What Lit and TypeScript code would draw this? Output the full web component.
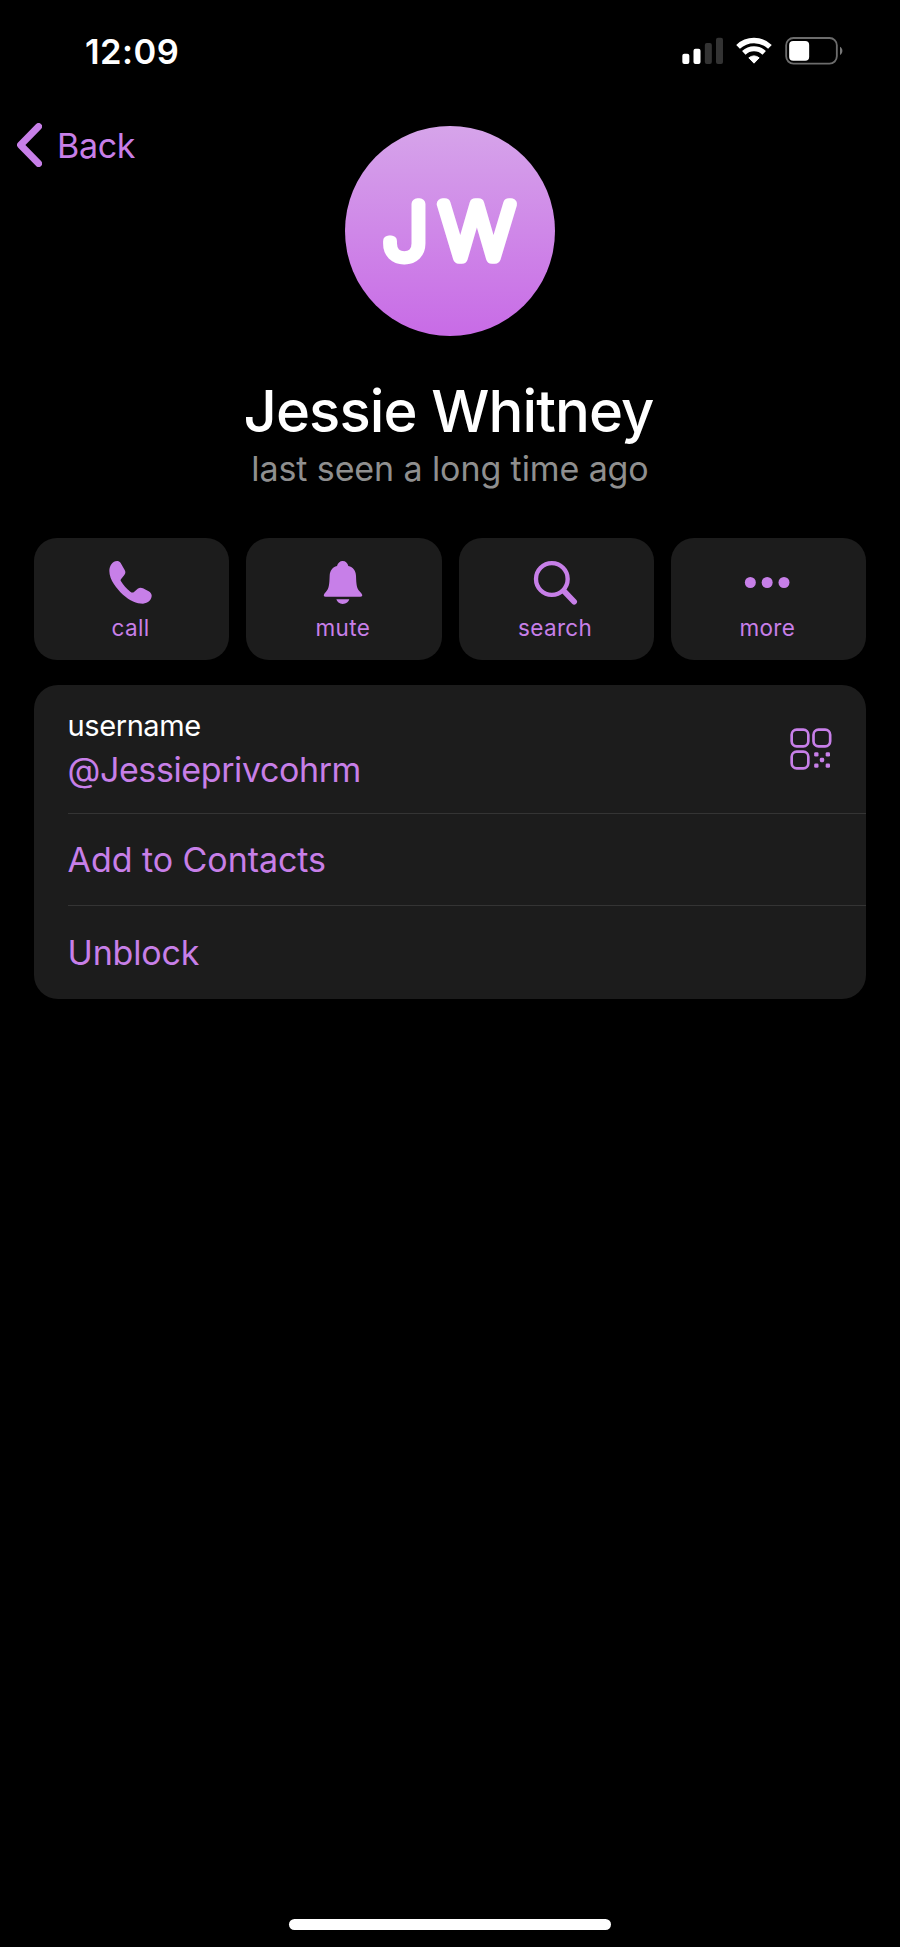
import { LitElement, html, svg, css } from "lit";
import { customElement } from "lit/decorators.js";

const icons = {
  call: svg`<svg class="icon" viewBox="263 93 144 132"><path d="M290 93C277 93 267 107 267 123C267 150 290 177 308 194C328 212 349 221 368 221C383 220 395 209 394 196C393 191 390 187 385 184L368 175C362 172 357 173 352 176L341 186C337 189 334 188 330 185C318 176 309 165 302 154C300 151 301 148 303 146L312 135C316 130 316 125 313 120L301 99C298 95 294 93 290 93Z"/></svg>`,
  mute: svg`<svg class="icon" viewBox="900 93 144 132"><path d="M968 93C977 93 983 99 985 108C1000 112 1007 122 1008 137C1009 165 1010 175 1020 185L1025 191C1029 196 1026 200 1021 200H917C911 200 910 196 913 191L918 185C927 175 928 165 929 137C930 122 937 112 951 108C953 99 960 93 968 93ZM949 208H988C986 216 979 222 968 222C958 222 951 216 949 208Z"/></svg>`,
  search: svg`<svg class="icon" viewBox="246.5 93 144 132"><circle class="line" cx="306" cy="147" r="47.500" stroke-width="13"/><path class="line" d="M343 184L373 215" stroke-width="17"/></svg>`,
  more: svg`<svg class="icon" viewBox="883 93 144 132"><circle cx="902" cy="157.500" r="16.500"/><circle cx="952.500" cy="157.500" r="16.500"/><circle cx="1003" cy="157.500" r="16.500"/></svg>`,
};

@customElement("status-bar")
class StatusBar extends LitElement {
  static styles = css`
    :host { display: flex; align-items: flex-start; justify-content: space-between; height: 123px; padding: 31.5px 57px 0 85px; box-sizing: border-box; }
    .time { font-size: 34.5px; font-weight: 600; line-height: 40px; letter-spacing: 0.5px; }
    .symbols { display: flex; gap: 12.5px; padding-top: 5.5px; }
    svg { display: block; height: 28px; }
    .signal { width: 41.333px; }
    .wifi { width: 36px; }
    .battery { width: 58px; margin-left: 0.7px; }
  `;
  render() {
    return html`
      <div class="time">12:09</div>
      <div class="symbols">
        <svg class="signal" viewBox="65 51 124 84" fill="#fff">
          <rect x="66" y="101" width="21" height="31" rx="6"/>
          <rect x="99.500" y="86" width="21" height="46" rx="6"/>
          <rect x="133.500" y="69" width="21" height="63" rx="6" fill="#333"/>
          <rect x="167" y="53" width="21" height="79" rx="6" fill="#333"/>
        </svg>
        <svg class="wifi" viewBox="227 51 108 84" fill="none" stroke="#fff">
          <path d="M233.200 80.600A69.500 69.500 0 0 1 328.800 80.600" stroke-width="16"/>
          <path d="M250.400 98.700A44.500 44.500 0 0 1 311.600 98.700" stroke-width="15"/>
          <path d="M265.500 113.500Q281 102 296.500 113.500L281 129.500Z" fill="#fff" stroke-width="3" stroke-linejoin="round"/>
        </svg>
        <svg class="battery" viewBox="374.500 51 174 84">
          <rect x="378" y="54" width="152" height="77" rx="22" fill="none" stroke="#6c6c6c" stroke-width="5.500"/>
          <rect x="387" y="63" width="60" height="59" rx="12" fill="#fff"/>
          <path d="M539.500 80C549 84 549 101 539.500 105Z" fill="#777"/>
        </svg>
      </div>`;
  }
}

@customElement("profile-header")
class ProfileHeader extends LitElement {
  static styles = css`
    :host { display: block; text-align: center; }
    .top { display: grid; grid-template-columns: 1fr 210px 1fr; align-items: start; }
    .back { display: flex; gap: 15.5px; padding-left: 16.5px; height: 44px; font-size: 34px; line-height: 45px; letter-spacing: -0.3px; color: #c77fe8; }
    .chevron { width: 25px; height: 44px; }
    .avatar { width: 210px; height: 210px; margin-top: 3px; border-radius: 50%; background: linear-gradient(#d6a4ea, #c86be6); }
    .avatar svg { display: block; width: 210px; height: 210px; }
    .initials { font-size: 74.5px; font-weight: 100; letter-spacing: 12.3px; fill: #fff; stroke: #fff; stroke-width: 11.4px; stroke-linejoin: round; stroke-linecap: round; }
    .name { margin-top: 44.5px; padding-right: 3px; font-size: 58px; font-weight: 500; line-height: 60px; letter-spacing: -0.9px; }
    .seen { margin-top: 8.5px; font-size: 34px; line-height: 40px; letter-spacing: -0.1px; color: #8f8f8f; }
  `;
  render() {
    return html`
      <div class="top">
        <div class="back">
          <svg class="chevron" viewBox="0 0 25 44"><path d="M21.600 3.500L3.500 22L21.600 40.500" fill="none" stroke="#c77fe8" stroke-width="6.900" stroke-linecap="round" stroke-linejoin="round"/></svg>
          <span>Back</span>
        </div>
        <div class="avatar"><svg viewBox="0 0 210 210"><text class="initials" transform="translate(38 132.300) scale(1.060 1)">JW</text></svg></div>
      </div>
      <div class="name">Jessie Whitney</div>
      <div class="seen">last seen a long time ago</div>`;
  }
}

@customElement("action-bar")
class ActionBar extends LitElement {
  static styles = css`
    :host { display: grid; grid-template-columns: repeat(4, 1fr); gap: 17px; }
    .action { display: flex; flex-direction: column; align-items: center; height: 122px; padding-top: 23px; box-sizing: border-box; border-radius: 23px; background: #1c1c1c; color: #c77fe8; }
    .icon { width: 48px; height: 44px; fill: #c77fe8; }
    .line { fill: none; stroke: #c77fe8; stroke-linecap: round; }
    .label { margin-top: 8.5px; padding-right: 2px; font-size: 22.5px; line-height: 28px; letter-spacing: 0.35px; }
  `;
  render() {
    return html`${Object.entries(icons).map(([label, icon]) => html`
      <div class="action">${icon}<span class="label">${label}</span></div>`)}`;
  }
}

@customElement("info-list")
class InfoList extends LitElement {
  static styles = css`
    :host { display: block; padding-left: 33.5px; border-radius: 24px; background: #1c1c1c; color: #c77fe8; font-size: 34px; line-height: 40px; }
    .row { display: flex; align-items: center; height: 92px; box-sizing: border-box; border-bottom: 1px solid #343434; letter-spacing: -0.05px; }
    .row:last-child { height: 93px; border-bottom: none; letter-spacing: -0.15px; }
    .user { height: 129px; justify-content: space-between; align-items: flex-start; padding: 24.5px 33.7px 0 0; letter-spacing: -0.4px; }
    .caption { margin-bottom: 8px; font-size: 29px; line-height: 32px; color: #fff; }
    .qr { width: 42px; height: 42px; margin-top: 18.5px; fill: #c77fe8; }
    .frame { fill: none; stroke: #c77fe8; stroke-width: 8; }
  `;
  render() {
    return html`
      <div class="row user">
        <div><div class="caption">username</div><div>@Jessieprivcohrm</div></div>
        <svg class="qr" viewBox="62 145 126 126">
          <rect class="frame" x="67" y="150" width="50" height="50" rx="15"/>
          <rect class="frame" x="132.500" y="150" width="50" height="50" rx="15"/>
          <rect class="frame" x="67" y="216" width="50" height="50" rx="15"/>
          <rect x="134.500" y="217.500" width="13" height="13" rx="4"/>
          <rect x="169" y="217.500" width="13" height="13" rx="4"/>
          <rect x="151.500" y="234.500" width="13" height="13" rx="4"/>
          <rect x="134.500" y="251.500" width="13" height="13" rx="4"/>
          <rect x="169" y="251.500" width="13" height="13" rx="4"/>
        </svg>
      </div>
      <div class="row">Add to Contacts</div>
      <div class="row">Unblock</div>`;
  }
}

@customElement("app-root")
class AppRoot extends LitElement {
  static styles = css`
    :host { display: flex; flex-direction: column; height: 1947px; background: #000; color: #fff; font-family: "Inter", sans-serif; }
    .content { display: grid; gap: 25px; margin: 49px 34px 0; }
    .home { width: 322px; height: 11px; margin: auto auto 17px; border-radius: 6px; background: #fff; }
  `;
  render() {
    return html`
      <status-bar></status-bar>
      <profile-header></profile-header>
      <div class="content"><action-bar></action-bar><info-list></info-list></div>
      <div class="home"></div>`;
  }
}
